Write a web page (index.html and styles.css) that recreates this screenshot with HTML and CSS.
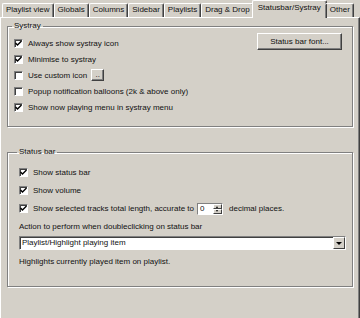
FILE: index.html
```html
<!DOCTYPE html>
<html lang="en">
<head>
    <meta charset="UTF-8">
    <meta name="viewport" content="width=device-width, initial-scale=1.0">
    <title>Preferences - Statusbar/Systray</title>
    <link rel="stylesheet" href="styles.css">
</head>
<body>
    <div class="window">
        <!-- Pestañas -->
        <div class="tabs">
            <div class="tab">Playlist view</div>
            <div class="tab">Globals</div>
            <div class="tab">Columns</div>
            <div class="tab">Sidebar</div>
            <div class="tab">Playlists</div>
            <div class="tab">Drag &amp; Drop</div>
            <div class="tab active">Statusbar/Systray</div>
            <div class="tab">Other</div>
        </div>

        <div class="panel">
            <!-- Systray -->
            <fieldset class="group systray">
                <legend>Systray</legend>
                <div class="systray-body">
                    <div class="options">
                        <label class="check"><span class="box"><svg viewBox="0 0 7 7"><path d="M0.5 3 L2.5 5 L6.5 1"/></svg></span>Always show systray icon</label>
                        <label class="check"><span class="box"><svg viewBox="0 0 7 7"><path d="M0.5 3 L2.5 5 L6.5 1"/></svg></span>Minimise to systray</label>
                        <label class="check"><span class="box"></span>Use custom icon <button class="btn dots">..</button></label>
                        <label class="check"><span class="box"></span>Popup notification balloons (2k &amp; above only)</label>
                        <label class="check"><span class="box"><svg viewBox="0 0 7 7"><path d="M0.5 3 L2.5 5 L6.5 1"/></svg></span>Show now playing menu in systray menu</label>
                    </div>
                    <button class="btn font-btn">Status bar font...</button>
                </div>
            </fieldset>

            <!-- Status bar -->
            <fieldset class="group statusbar">
                <legend>Status bar</legend>
                <label class="check tall"><span class="box"><svg viewBox="0 0 7 7"><path d="M0.5 3 L2.5 5 L6.5 1"/></svg></span>Show status bar</label>
                <label class="check tall"><span class="box"><svg viewBox="0 0 7 7"><path d="M0.5 3 L2.5 5 L6.5 1"/></svg></span>Show volume</label>
                <label class="check taller"><span class="box"><svg viewBox="0 0 7 7"><path d="M0.5 3 L2.5 5 L6.5 1"/></svg></span>Show selected tracks total length, accurate to
                    <span class="spin">
                        <span class="spin-value">0</span>
                        <span class="spin-arrows">
                            <span class="arrow up"></span>
                            <span class="arrow down"></span>
                        </span>
                    </span>
                    decimal places.</label>
                <div class="caption">Action to perform when doubleclicking on status bar</div>
                <div class="combo">
                    <span class="combo-value">Playlist/Highlight playing item</span>
                    <span class="combo-btn"><span class="tri"></span></span>
                </div>
                <div class="hint">Highlights currently played item on playlist.</div>
            </fieldset>
        </div>
    </div>
</body>
</html>
```

FILE: styles.css
```css
/* Estilos generales */
body {
    margin: 0;
    background-color: #d4d0c8;
    font-family: "Liberation Sans", Arial, sans-serif;
    font-size: 8px;
    color: #111;
    overflow: hidden;
}

.window {
    width: 360px;
    height: 318px;
}

/* Pestañas */
.tabs {
    display: flex;
    align-items: flex-end;
    height: 17px;
    padding-left: 2px;
    position: relative;
    z-index: 1;
}

.tab {
    height: 13px;
    line-height: 12px;
    padding: 0 3px;
    border-top: 1px solid #fff;
    border-left: 1px solid #fff;
    border-right: 1px solid #404040;
    box-shadow: inset -1px 0 0 #808080;
    border-radius: 2px 2px 0 0;
    white-space: nowrap;
}

.tab.active {
    height: 17px;
    line-height: 14px;
    margin: 0 -2px -1px -2px;
    padding: 0 5px;
    background-color: #d4d0c8;
    align-self: flex-start;
}

.tab.active + .tab {
    border-left: none;
    padding-left: 5px;
}

/* Panel */
.panel {
    height: 298px;
    border-top: 1px solid #fff;
    border-left: 1px solid #fff;
    border-right: 1px solid #404040;
    border-bottom: 1px solid #404040;
    box-shadow: inset -1px -1px 0 #808080;
    padding: 3px 6px 0 6px;
}

/* Grupos */
.group {
    margin: 0;
    border: 1px solid #808080;
    box-shadow: inset 1px 1px 0 #fff, 1px 1px 0 #fff;
    padding: 0 6px 11px 6px;
}

.group legend {
    padding: 0 2px;
    margin-left: -2px;
    line-height: 10px;
}

.systray-body {
    display: flex;
    justify-content: space-between;
    align-items: flex-start;
    padding-top: 4px;
}

.statusbar {
    margin-top: 20px;
    padding: 6px 8px 16px 11px;
}

/* Casillas */
.check {
    display: flex;
    align-items: center;
    height: 16px;
    white-space: nowrap;
}

.check.tall {
    height: 18px;
}

.check.taller {
    height: 19px;
}

.box {
    width: 7px;
    height: 7px;
    margin-right: 5px;
    background-color: #fff;
    border-top: 1px solid #808080;
    border-left: 1px solid #808080;
    border-right: 1px solid #fff;
    border-bottom: 1px solid #fff;
    box-shadow: inset 1px 1px 0 #404040;
    display: flex;
    flex-shrink: 0;
}

.box svg {
    width: 7px;
    height: 7px;
}

.box path {
    fill: none;
    stroke: #000;
    stroke-width: 1.4;
}

/* Botones */
.btn {
    font-family: inherit;
    font-size: 8px;
    color: #111;
    background-color: #d4d0c8;
    border: 1px solid;
    border-color: #fff #404040 #404040 #fff;
    box-shadow: inset -1px -1px 0 #808080;
    padding: 0;
    margin: 0;
}

.dots {
    width: 13px;
    height: 12px;
    margin-left: 4px;
    line-height: 8px;
}

.font-btn {
    width: 85px;
    height: 17px;
    margin-top: -2px;
    margin-right: 4px;
}

/* Spin */
.spin {
    display: inline-flex;
    width: 24px;
    height: 10px;
    margin: 0 6px 0 3px;
    background-color: #fff;
    border-top: 1px solid #808080;
    border-left: 1px solid #808080;
    border-right: 1px solid #fff;
    border-bottom: 1px solid #fff;
}

.spin-value {
    flex: 1;
    padding-left: 2px;
    line-height: 10px;
}

.spin-arrows {
    display: flex;
    flex-direction: column;
    width: 9px;
}

.arrow {
    flex: 1;
    background-color: #d4d0c8;
    border: 1px solid;
    border-color: #fff #404040 #404040 #fff;
    position: relative;
}

.arrow::after {
    content: "";
    position: absolute;
    left: 2px;
    top: 1px;
    border-left: 1.5px solid transparent;
    border-right: 1.5px solid transparent;
}

.arrow.up::after {
    border-bottom: 2px solid #000;
}

.arrow.down::after {
    border-top: 2px solid #000;
    top: 0;
}

.caption {
    line-height: 18px;
}

/* Combo */
.combo {
    display: flex;
    height: 12px;
    margin-right: -2px;
    background-color: #fff;
    border-top: 1px solid #808080;
    border-left: 1px solid #808080;
    border-right: 1px solid #fff;
    border-bottom: 1px solid #fff;
    box-shadow: inset 1px 1px 0 #404040;
}

.combo-value {
    flex: 1;
    padding-left: 2px;
    line-height: 12px;
}

.combo-btn {
    width: 10px;
    background-color: #d4d0c8;
    border: 1px solid;
    border-color: #fff #404040 #404040 #fff;
    display: flex;
    align-items: center;
    justify-content: center;
}

.tri {
    border-left: 3px solid transparent;
    border-right: 3px solid transparent;
    border-top: 3px solid #000;
}

.hint {
    margin-top: 4px;
    line-height: 16px;
}
```
